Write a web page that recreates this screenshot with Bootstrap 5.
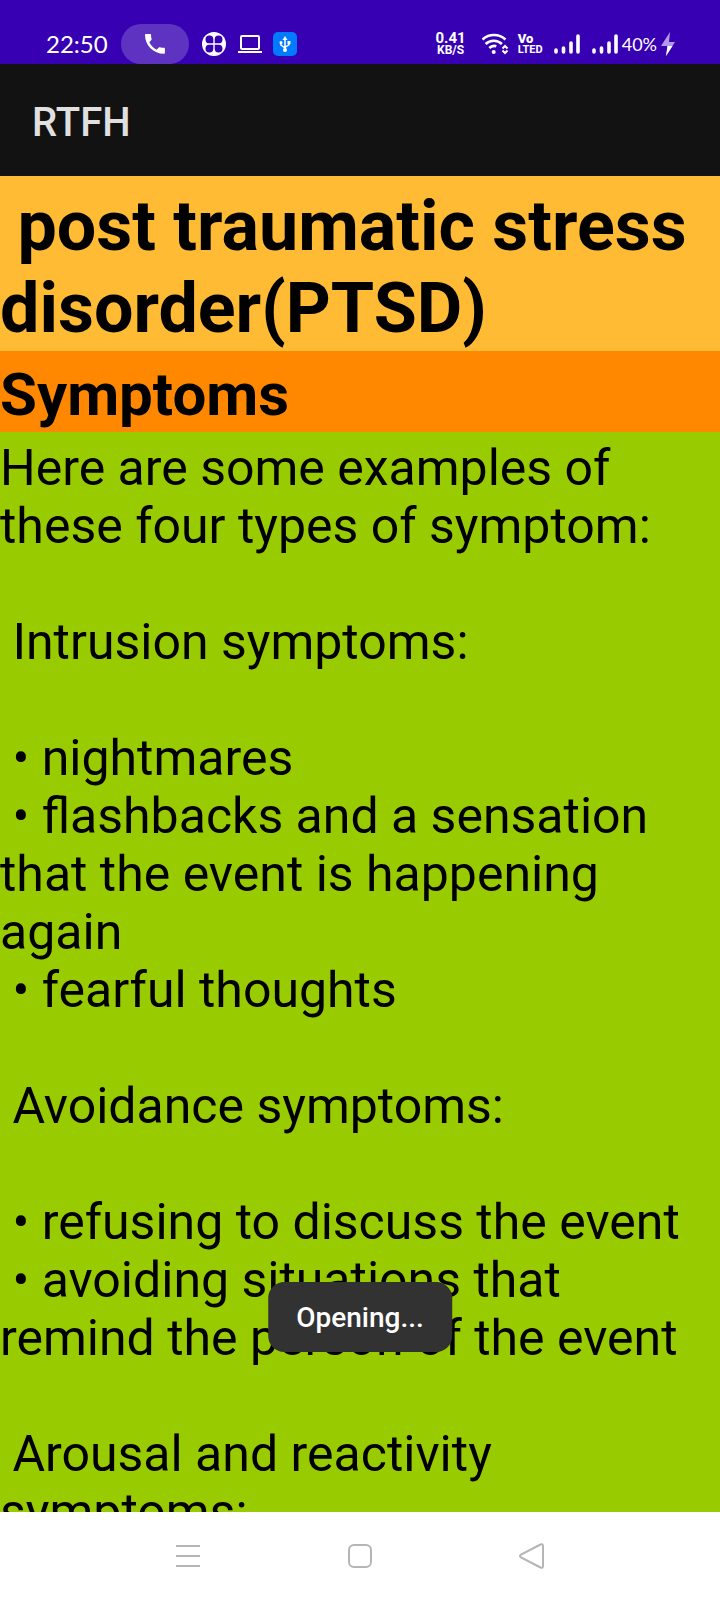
<!DOCTYPE html>
<html lang="en">
<head>
<meta charset="utf-8">
<meta name="viewport" content="width=device-width, initial-scale=1">
<title>RTFH</title>
<link href="https://cdn.jsdelivr.net/npm/bootstrap@5.3.0/dist/css/bootstrap.min.css" rel="stylesheet">
<style>
  body { font-family: Roboto, "Liberation Sans", sans-serif; color: #000; }
  .status-bar { background: #3700b3; padding: 24px 45px 0 46px; }
  .status-row { height: 40px; }
  .clock { font: 24px/38px Lato, sans-serif; width: 62px; }
  .call-pill { width: 68px; height: 40px; background: #5f33c2; margin: 0 13px; }
  .speed { font-size: 15px; line-height: 12px; }
  .speed span { font-size: 12px; line-height: 12px; }
  .volte { font-size: 13px; line-height: 11px; width: 24px; }
  .volte span { font-size: 11px; }
  .gap-start { margin-left: 12px; }
  .percent { font: 18px/38px Lato, sans-serif; }
  .app-bar { background: #121212; padding: 6px 32px 0; height: 112px; }
  .app-bar h1 { font-size: 40px; line-height: 48px; font-weight: 500; color: #e0e0e0; }
  .topic { background: #ffbb33; font-size: 70px; line-height: 82px; padding: 9px 0 2px; }
  .section-title { background: #ff8800; font-size: 60px; line-height: 70px; padding: 9px 0 2px; }
  .article { background: #99cc00; font-size: 50px; line-height: 58px; padding-top: 7px; }
  .article p, .article ul { margin-bottom: 58px; }
  .notice { bottom: 160px; background: #323232; border-radius: 16px; font-size: 28px; font-weight: 500; line-height: 32px; padding: 20px 28px 18px; }
  .nav-keys { height: 88px; background: #fff; }
  .nav-keys button { width: 24%; }
</style>
</head>
<body>
<div class="d-flex flex-column vh-100 overflow-hidden">
  <div class="status-bar text-white flex-shrink-0">
    <div class="status-row d-flex align-items-center">
      <span class="clock">22:50</span>
      <span class="call-pill rounded-pill d-flex align-items-center justify-content-center">
        <svg width="22" height="22" viewBox="0 0 22 22" fill="#fff"><path d="M2 1h4c.6 0 1 .4 1 1 0 1.400.2 2.700.6 3.800.1.400 0 .8-.3 1.100L5.300 9.300c1.600 3.300 4 5.800 7.300 7.400l2.200-2.200c.3-.3.700-.4 1.100-.3 1.200.4 2.500.6 3.900.6.700 0 1.100.4 1.100 1v4c0 .6-.4 1-1 1C9.500 20.800 1 12.500 1 2c0-.6.4-1 1-1z"/></svg>
      </span>
      <svg class="me-2" width="24" height="24" viewBox="0 0 24 24"><circle cx="12" cy="12" r="12" fill="#fff"/><g fill="#3700b3"><path d="M11.300 11.300H7.500a3.900 3.900 0 1 1 3.800-3.800zM12.700 11.300V7.500a3.900 3.900 0 1 1 3.800 3.800zM11.300 12.700v3.800a3.900 3.900 0 1 1-3.800-3.800zM12.700 12.700h3.800a3.900 3.900 0 1 1-3.800 3.800z"/></g></svg>
      <svg class="ms-1" width="24" height="24" viewBox="0 0 24 24" fill="none" stroke="#fff" stroke-width="2"><rect x="3" y="4" width="18" height="13" rx="1"/><path d="M0 20h24"/></svg>
      <svg class="ms-2" width="28" height="24" viewBox="-3 0 28 24"><rect width="24" height="24" rx="5" fill="#007bff"/><g fill="none" stroke="#fff" stroke-width="1.500"><path d="M12 6v12M8 10.500V13l4 3M16 10.500v2l-4 3"/></g><g fill="#fff"><path d="M12 4l2.500 4h-5z"/><circle cx="12" cy="18" r="2"/><circle cx="8" cy="10.500" r="1.500"/><rect x="14.500" y="9" width="3" height="3"/></g></svg>

      <div class="speed ms-auto text-center fw-bold d-flex flex-column">0.41<span>KB/S</span></div>
      <svg class="ms-3" width="28" height="24" viewBox="1 0 28 24" fill="none" stroke="#fff" stroke-width="2.600"><path d="M1.500 7.500a17 17 0 0 1 23 0M4.600 12a12 12 0 0 1 16.300 0M8.300 16a7 7 0 0 1 7-1.800"/><circle cx="12.700" cy="20" r="2" fill="#fff" stroke="none"/><path d="M21.500 16.500l2.500-2.500 2.500 2.500M21.500 18.500l2.500 2.500 2.500-2.500" stroke-width="2"/></svg>
      <div class="volte fw-bold d-flex flex-column ms-2"><b>Vo</b><span>LTED</span></div>
      <svg class="gap-start" width="26" height="24" viewBox="0 0 26 24" stroke="#fff" stroke-width="3.600" stroke-linecap="round"><path d="M2 18v2M9.500 16v4M17 11v9M24 4v16"/></svg>
      <svg class="gap-start" width="26" height="24" viewBox="0 0 26 24" stroke="#fff" stroke-width="3.600" stroke-linecap="round"><path d="M2 18v2M9.500 16v4M17 11v9M24 4v16"/></svg>
      <span class="percent ms-1">40%</span>
      <svg class="ms-1" width="14" height="24" viewBox="0 0 14 24"><path d="M9 0L0 14h6.500L5 24l9-14H8z" fill="#b39ae6"/><path d="M0 14h6.500L5 24l6.500-10z" fill="#fff"/></svg>
    </div>
  </div>

  <header class="app-bar d-flex align-items-center flex-shrink-0">
    <h1 class="m-0">RTFH</h1>
  </header>

  <main class="flex-grow-1 overflow-hidden position-relative d-flex flex-column">
    <h2 class="topic fw-bold m-0 flex-shrink-0">&nbsp;post traumatic stress disorder(PTSD)</h2>
    <h3 class="section-title fw-bold m-0 flex-shrink-0">Symptoms</h3>
    <div class="article flex-grow-1 overflow-hidden">
      <p>Here are some examples of these four types of symptom:</p>
      <p>&nbsp;Intrusion symptoms:</p>
      <ul class="list-unstyled">
        <li>&nbsp;• nightmares</li>
        <li>&nbsp;• flashbacks and a sensation that the event is happening again</li>
        <li>&nbsp;• fearful thoughts</li>
      </ul>
      <p>&nbsp;Avoidance symptoms:</p>
      <ul class="list-unstyled">
        <li>&nbsp;• refusing to discuss the event</li>
        <li>&nbsp;• avoiding situations that remind the person of the event</li>
      </ul>
      <p>&nbsp;Arousal and reactivity symptoms:</p>
    </div>
    <div class="notice position-absolute start-50 translate-middle-x text-white" role="status">Opening...</div>
  </main>

  <nav class="nav-keys d-flex justify-content-center flex-shrink-0" aria-label="System">
    <button class="btn border-0 p-0" aria-label="Recent apps"><svg width="26" height="28" viewBox="0 0 26 28" stroke="#b5b5b5" stroke-width="2"><path d="M2 4h24M2 14h24M2 24h24"/></svg></button>
    <button class="btn border-0 p-0" aria-label="Home"><svg width="26" height="28" viewBox="0 0 26 28" fill="none" stroke="#b5b5b5" stroke-width="2"><rect x="2" y="3" width="22" height="22" rx="5"/></svg></button>
    <button class="btn border-0 p-0" aria-label="Back"><svg width="28" height="28" viewBox="2 0 28 28" fill="none" stroke="#b5b5b5" stroke-width="2"><path d="M23.500 2.500L4 12.500q-2 1.500 0 3l19.500 10q2.500 1 2.500-1.500V4q0-2.500-2.500-1.500z"/></svg></button>
  </nav>
</div>
<script src="https://cdn.jsdelivr.net/npm/bootstrap@5.3.0/dist/js/bootstrap.bundle.min.js"></script>
</body>
</html>
